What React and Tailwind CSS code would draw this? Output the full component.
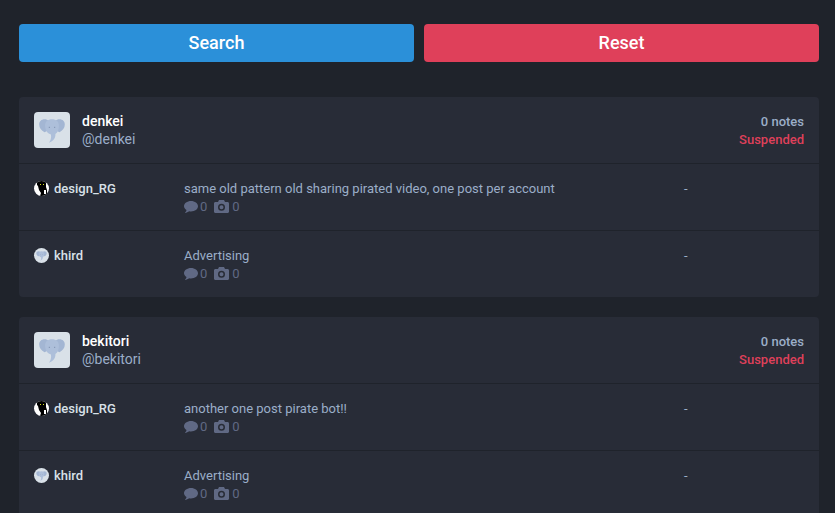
function Elephant({ className }) {
  return (
    <svg viewBox="0 0 30 30" className={className}>
      <path fill="#a3b6d3" d="M8 5c-3 0-5 2-5 4.800 0 3.200 2 5.700 5 7.200l4-2V6.500C11 5.500 9.500 5 8 5zM22 5c3 0 5 2 5 4.800 0 3.200-2 5.700-5 7.200l-4-2V6.500c1-1 2.500-1.500 4-1.500z" />
      <path fill="#adbfda" d="M15 5c4 0 6.500 2.200 6.500 6 0 3.800-1.300 6.500-3.300 7.800.2 3.700-1.700 6.700-6.200 8.200 1.600-2 2.600-4.400 2-7.800-2.800-.8-5.500-3.600-5.500-8.200 0-3.800 2.500-6 6.500-6z" />
      <rect x="12" y="12" width="1" height="1" fill="#7d8fae" />
      <rect x="17" y="12" width="1" height="1" fill="#7d8fae" />
    </svg>
  );
}

function DesignAvatar() {
  return (
    <div className="mt-[1px] flex h-[15px] w-[15px] items-center justify-center overflow-hidden rounded-full bg-white">
      <svg viewBox="0 0 15 15" className="h-[15px] w-[15px]">
        <path fill="#000" d="M3 0h9v6l1 3v6H6l1-3-2-3-1-4-1-1z" />
        <rect x="6" y="3" width="1" height="1" fill="#d8e020" />
        <rect x="9" y="3" width="1" height="1" fill="#d8e020" />
        <rect x="10" y="9" width="2" height="4" fill="#ffffff" />
      </svg>
    </div>
  );
}

function KhirdAvatar() {
  return (
    <div className="mt-[1px] flex h-[15px] w-[15px] items-center justify-center overflow-hidden rounded-full bg-[#d9e1e8]">
      <Elephant className="h-[13px] w-[13px]" />
    </div>
  );
}

function CommentIcon() {
  return (
    <svg viewBox="0 0 14 12" className="h-[12px] w-[14px] fill-[#606984]">
      <path d="M7 0c3.900 0 7 2.300 7 5.200s-3.100 5.200-7 5.200c-.6 0-1.200 0-1.800-.2C4.200 11 2.500 11.700.8 12c.9-.9 1.600-1.900 1.700-3C1 8 0 6.700 0 5.200 0 2.300 3.100 0 7 0z" />
    </svg>
  );
}

function CameraIcon() {
  return (
    <svg viewBox="0 0 15 13" className="h-[13px] w-[15px] fill-[#606984]">
      <path
        fillRule="evenodd"
        d="M5 0h5l1 2h2.500C14.400 2 15 2.600 15 3.500v8c0 .9-.6 1.500-1.500 1.500h-12C.6 13 0 12.400 0 11.500v-8C0 2.600.6 2 1.500 2H4l1-2zM7.500 3.800a3.500 3.500 0 1 0 0 7 3.500 3.500 0 0 0 0-7zm0 1.500a2 2 0 1 1 0 4 2 2 0 0 1 0-4z"
      />
    </svg>
  );
}

function ReportRow({ avatar, reporter, comment }) {
  return (
    <div className="flex h-[67px] border-t border-[#1f232b] px-[15px] pt-[16px]">
      <div className="flex w-[150px] items-start gap-[5px]">
        {avatar}
        <span className="mt-[1px] text-[13px] leading-[15px] font-medium text-[#d9e1e8]">{reporter}</span>
      </div>
      <div className="w-[500px]">
        <div className="text-[13px] leading-[17px] text-[#9baec8]">{comment}</div>
        <div className="mt-[3px] flex h-[14px] items-center text-[13px] leading-[14px] text-[#606984]">
          <span className="-mt-[1px] flex">
            <CommentIcon />
          </span>
          <span className="ml-[2px]">0</span>
          <span className="ml-[7px] -mt-[1px] flex">
            <CameraIcon />
          </span>
          <span className="ml-[3px]">0</span>
        </div>
      </div>
      <div className="text-[13px] leading-[17px] text-[#9baec8]">-</div>
    </div>
  );
}

function AccountCard({ name, rows }) {
  return (
    <div className="overflow-hidden rounded-[4px] bg-[#282c37]">
      <div className="flex h-[66px] items-center justify-between px-[15px]">
        <div className="flex items-center gap-[12px]">
          <div className="flex h-[36px] w-[36px] items-center justify-center rounded-[4px] bg-[#d9e1e8]">
            <Elephant className="h-[32px] w-[32px]" />
          </div>
          <div>
            <div className="text-[14px] leading-[18px] font-medium text-white">{name}</div>
            <div className="text-[14px] leading-[18px] text-[#9baec8]">@{name}</div>
          </div>
        </div>
        <div className="pt-[2px] text-right text-[13px] leading-[18px] font-medium">
          <div className="text-[#9baec8]">0 notes</div>
          <div className="text-[#df405a]">Suspended</div>
        </div>
      </div>
      {rows.map((row) => (
        <ReportRow key={row.reporter} {...row} />
      ))}
    </div>
  );
}

export default function App() {
  const firstRows = [
    {
      avatar: <DesignAvatar />,
      reporter: "design_RG",
      comment: "same old pattern old sharing pirated video, one post per account",
    },
    { avatar: <KhirdAvatar />, reporter: "khird", comment: "Advertising" },
  ];
  const secondRows = [
    { avatar: <DesignAvatar />, reporter: "design_RG", comment: "another one post pirate bot!!" },
    { avatar: <KhirdAvatar />, reporter: "khird", comment: "Advertising" },
  ];

  return (
    <div className="h-[513px] overflow-hidden bg-[#1f232b] pt-[24px] pr-[16px] pl-[19px] font-['Roboto',sans-serif]">
      <div className="flex gap-[10px]">
        <button className="h-[38px] flex-1 rounded-[4px] bg-[#2b90d9] pb-[2px] text-[18px] font-medium text-white">
          Search
        </button>
        <button className="h-[38px] flex-1 rounded-[4px] bg-[#df405a] pb-[2px] text-[18px] font-medium text-white">
          Reset
        </button>
      </div>
      <div className="mt-[35px] flex flex-col gap-[20px]">
        <AccountCard name="denkei" rows={firstRows} />
        <AccountCard name="bekitori" rows={secondRows} />
      </div>
    </div>
  );
}
